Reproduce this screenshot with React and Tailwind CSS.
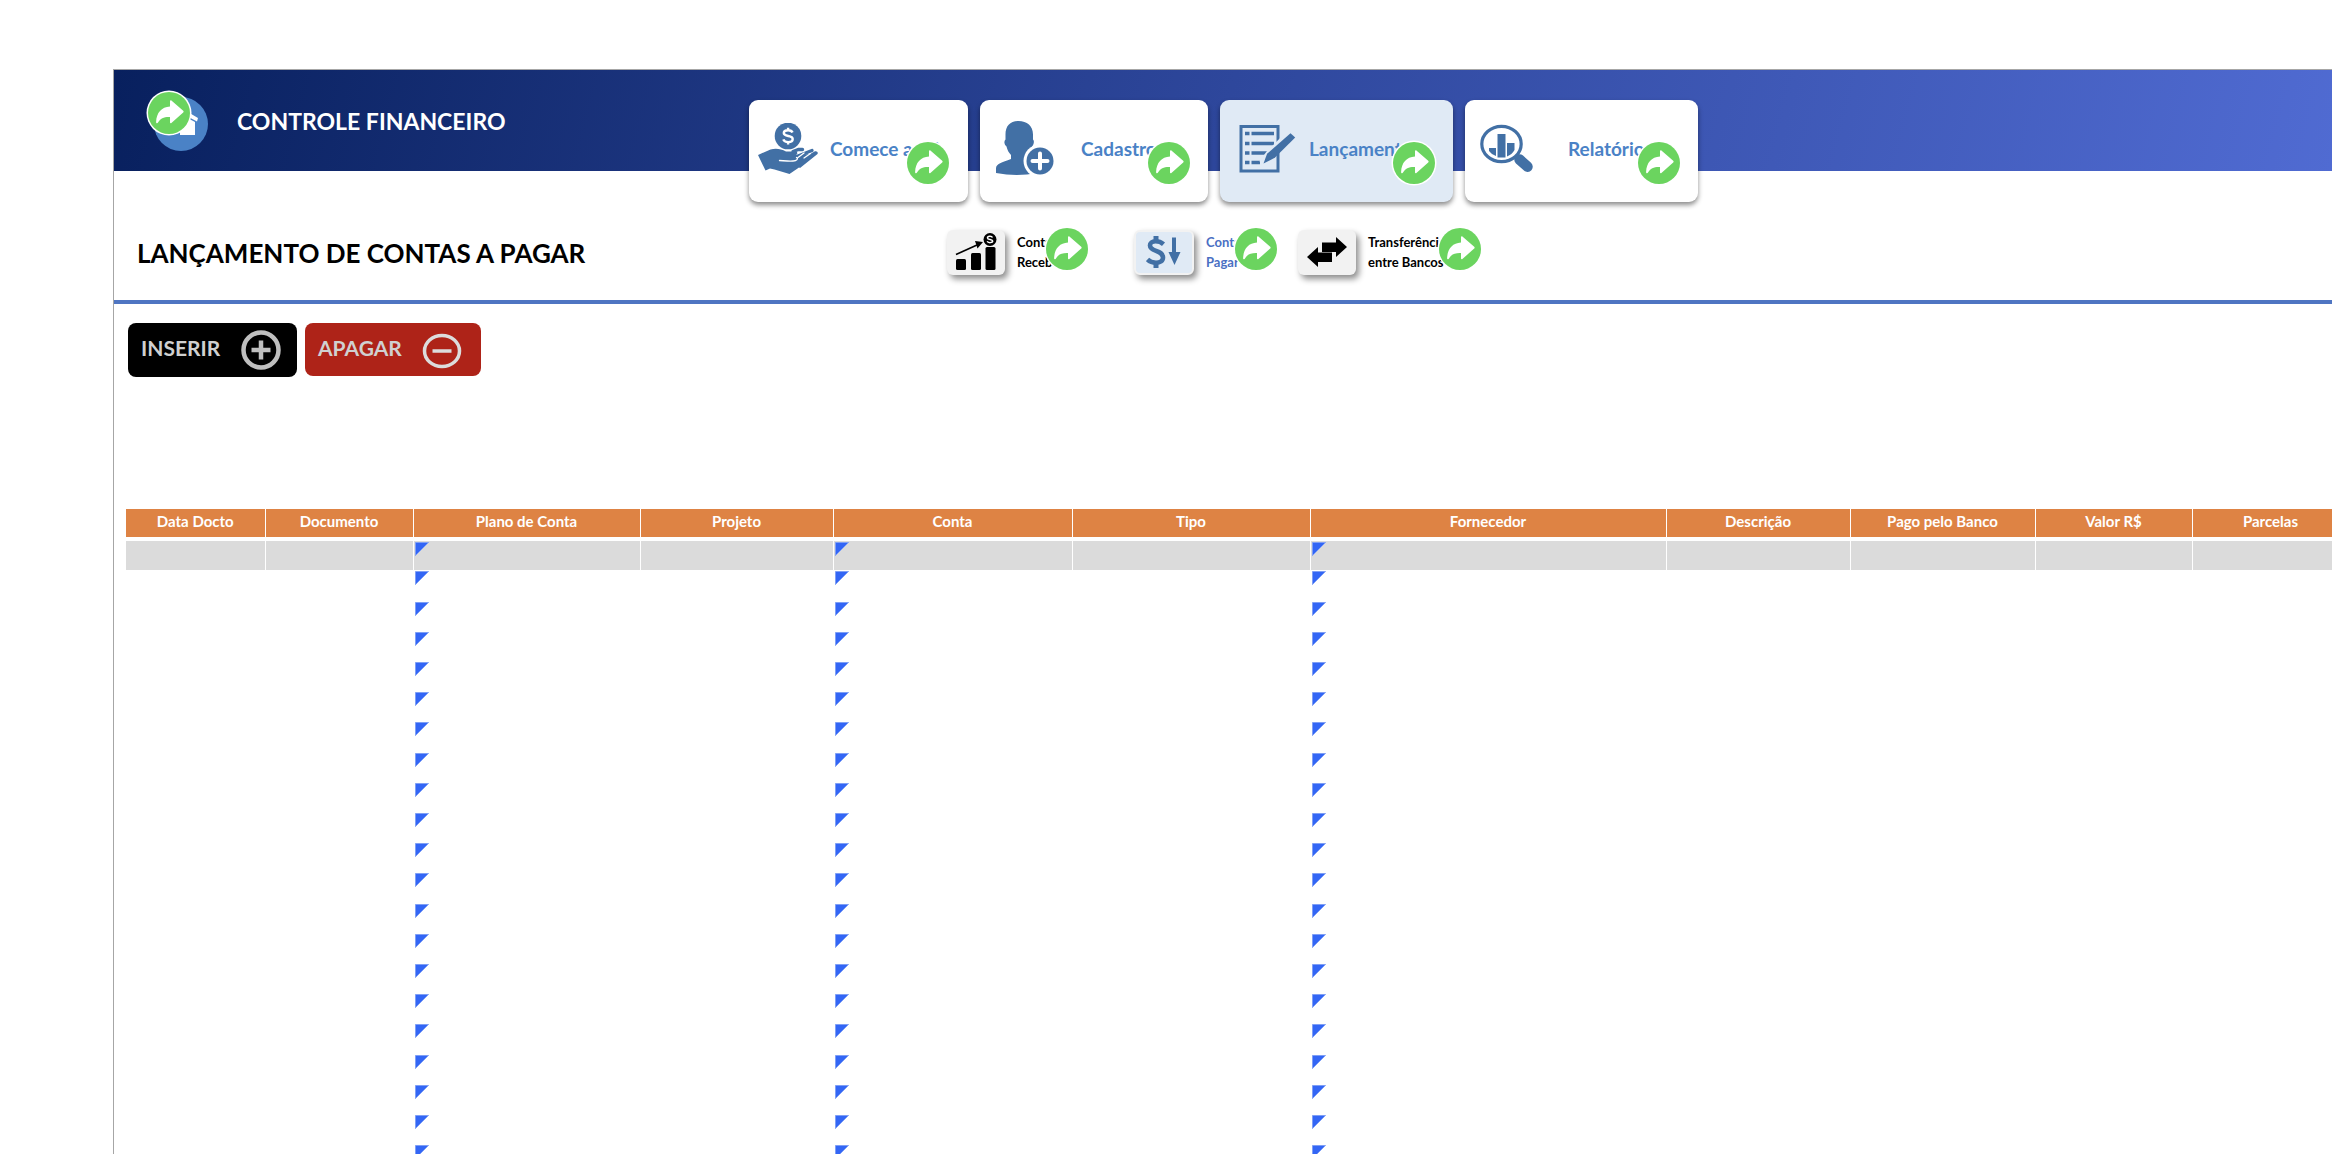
import React from 'react';

const columns = [
  { label: 'Data Docto', width: 'w-[139px]' },
  { label: 'Documento', width: 'w-[148px]' },
  { label: 'Plano de Conta', width: 'w-[227px]', marked: true },
  { label: 'Projeto', width: 'w-[193px]' },
  { label: 'Conta', width: 'w-[239px]', marked: true },
  { label: 'Tipo', width: 'w-[238px]' },
  { label: 'Fornecedor', width: 'w-[356px]', marked: true },
  { label: 'Descrição', width: 'w-[184px]' },
  { label: 'Pago pelo Banco', width: 'w-[185px]' },
  { label: 'Valor R$', width: 'w-[157px]' },
  { label: 'Parcelas', width: 'w-[157px]' },
];

const rows = Array.from({ length: 21 }, (_, i) => i);

const rowClass = (row) => {
  if (row === 0) return 'h-[29px] bg-[#dbdbdb]';
  return row % 5 === 1 ? 'h-[31px]' : 'h-[30px]';
};

// Green round shortcut that lies over the corner of each link
const ShortcutBadge = ({ className }) => (
  <svg viewBox="0 0 46 46" className={`absolute size-[46px] ${className}`} aria-hidden="true">
    <circle cx="23" cy="23" r="22.5" fill="#fff" />
    <circle cx="23" cy="23" r="21" fill="#6bd45f" />
    <path
      d="M24 11.200c0-.8.8-1.100 1.400-.6l11.800 10.200c.6.5.6 1.200 0 1.700L25.400 33c-.6.5-1.400.2-1.400-.6v-5.400c-6-.2-9.400 1-12 5.600-.6 1.100-2 .7-1.900-.6.500-9.300 5.300-14.800 13.900-15.400z"
      fill="#fff"
    />
  </svg>
);

const HandCoinIcon = () => (
  <svg viewBox="0 0 60 52" className="h-[52px] w-[60px]" aria-hidden="true">
    <circle cx="30" cy="13" r="13.300" fill="#4270a5" />
    <path d="M34.500 9.500c-.6-1.700-2.300-2.300-4.400-2.300-2.500 0-4.300 1.100-4.300 2.900 0 4.200 8.900 1.600 8.900 5.900 0 2-1.900 3.100-4.500 3.100-2.400 0-4.200-.8-4.900-2.700M30.100 4.800v2.400M30.100 19.100v2.500" fill="none" stroke="#fff" strokeWidth="2.400" />
    <path d="M0 32 12.500 26.500c5-1.500 10.500-.8 15.500 2l9.500 0c2.200.1 2.600 3 .2 3.400l21-1.400L41 44.500 31.500 51 16.500 46.500 12 45.500 7.500 47.500z" fill="#4270a5" />
    <path d="M31 36.500 41 37.500 56.500 28.500c2-.9 4 .6 3 2.500L42 45z" fill="#4270a5" />
    <path d="M35 28.500 40.500 26.500h4M40 33l14-5.500" stroke="#4270a5" strokeWidth="3.400" strokeLinecap="round" fill="none" />
    <path d="M21.500 37.500c5 .3 9 .8 13.500.5 4 0 5.500-2.500 3.500-3.500M40 34.500l6-4.500M46 35l6.500-4.500" stroke="#fff" strokeWidth="1.300" strokeLinecap="round" fill="none" />
  </svg>
);

const UserPlusIcon = () => (
  <svg viewBox="0 0 60 56" className="h-[56px] w-[60px]" aria-hidden="true">
    <path d="M23.500 0C32 0 38 5 38 13.500v5c1.500 1 1 5-1 7-1 4-4 6.500-4.500 9l1.500 4c2 1.500 6 2.400 8 4V52Q22 56 1 52V47.500c0-5 6-6 15-9.500V34c-2.500-2.500-3.500-5-4.500-8.500C9 23.500 8.800 20 10.500 18.500v-5C10.500 5 15 0 23.500 0z" fill="#4270a5" />
    <circle cx="45" cy="40" r="16.500" fill="#fff" />
    <circle cx="45" cy="40" r="13.500" fill="#4270a5" />
    <path d="M45 32.500v15M37.500 40h15" stroke="#fff" strokeWidth="4" strokeLinecap="round" />
  </svg>
);

const NotePenIcon = () => (
  <svg viewBox="0 0 58 50" className="h-[50px] w-[58px]" aria-hidden="true">
    <rect x="2" y="2.500" width="37" height="44.500" fill="none" stroke="#4270a5" strokeWidth="3" />
    <path d="M6 9.500h4.500M12.500 9.500H35M6 19.500h4.500M12.500 19.500H35M6 29h4.500M12.500 29H28M6 38.500h4.500M12.500 38.500h8.500" stroke="#4270a5" strokeWidth="3.600" />
    <path d="M53 8.500 31 30.500 24 40" stroke="#e0eaf5" strokeWidth="9" />
    <path d="m51.500 9.200 4.700 4.300-20.400 20.300L24.500 39.500l3.600-9.800z" fill="#4270a5" />
  </svg>
);

const ReportIcon = () => (
  <svg viewBox="0 0 54 50" className="h-[50px] w-[54px]" aria-hidden="true">
    <ellipse cx="21.500" cy="20" rx="19.700" ry="17.700" fill="none" stroke="#4270a5" strokeWidth="3.200" />
    <path d="M17.500 10h8v23.500h-8zM9 24h7v8q-5-2-7-5zM27 19h7.500v7q-2.500 4.500-7.500 6.500z" fill="#4270a5" />
    <path d="m39.500 35.500 8 7.200" stroke="#4270a5" strokeWidth="10.500" strokeLinecap="round" />
  </svg>
);

const GrowthIcon = () => (
  <svg viewBox="0 0 44 38" className="h-[38px] w-[44px]" aria-hidden="true">
    <rect x="2" y="26" width="10" height="11" rx="1.500" />
    <rect x="17" y="20" width="10" height="17" rx="1.500" />
    <rect x="31.500" y="14" width="10" height="23" rx="1.500" />
    <path d="M2 21.500 23 12" stroke="#000" strokeWidth="1.600" />
    <path d="m21 8 8 1-5.500 6.500z" />
    <circle cx="36" cy="6.500" r="6.500" />
    <path d="M38.500 4.500c-.8-1.600-5-1.600-5 .4s5.200 1.200 5.200 3.200-4.800 2-5.500.2" fill="none" stroke="#fff" strokeWidth="1.500" />
  </svg>
);

const DollarDownIcon = () => (
  <svg viewBox="0 0 36 32" className="h-[32px] w-[36px]" aria-hidden="true">
    <path d="M17.500 8.200C15 6 12 5.300 9.500 5.300 6 5.300 4 7 4 9.500c0 6.500 13 4.300 13 12 0 3.500-3 5.200-7 5.200-3.500 0-6.500-1.200-8.500-3.200" fill="none" stroke="#4270a5" strokeWidth="4.600" />
    <path d="M10 0v5M10 27v5" stroke="#4270a5" strokeWidth="5" />
    <path d="M26 1.500h4V16h4.500L28.500 29 22.500 16H26z" fill="#4270a5" />
  </svg>
);

const TransferIcon = () => (
  <svg viewBox="0 0 40 30" className="h-[30px] w-[40px]" aria-hidden="true">
    <path d="M15 5.500h14V0l11 10-11 10v-5H15zM0 20 11 10v5.500h14V25H11v5z" />
  </svg>
);

const tabs = [
  { label: 'Comece aqui', Icon: HandCoinIcon, card: 'w-[219px] bg-white pl-[9px]', text: 'ml-[12px]', badge: 'right-[17px]' },
  { label: 'Cadastros', Icon: UserPlusIcon, card: 'w-[228px] bg-white pl-[15px]', text: 'ml-[26px]', badge: 'right-[16px]' },
  { label: 'Lançamentos', Icon: NotePenIcon, card: 'w-[233px] bg-[#e0eaf5] pl-[19px]', text: 'ml-[12px]', badge: 'right-[16px]' },
  { label: 'Relatórios', Icon: ReportIcon, card: 'w-[233px] bg-white pl-[15px]', text: 'ml-[34px]', badge: 'right-[16px]' },
];

const shortcuts = [
  { lines: ['Contas a', 'Receber'], Icon: GrowthIcon, link: 'w-[187px]', box: 'w-[58px] bg-[#f2f2f2]', text: 'text-black', badge: 'left-[97px]' },
  { lines: ['Contas a', 'Pagar'], Icon: DollarDownIcon, link: 'w-[164px]', box: 'w-[60px] border-2 border-[#f2f2f2] bg-[#e0eaf5]', text: 'text-[#4a6fc3]', badge: 'left-[99px]' },
  { lines: ['Transferência', 'entre Bancos'], Icon: TransferIcon, link: 'w-[187px]', box: 'w-[58px] bg-[#f2f2f2]', text: 'text-black', badge: 'left-[139px]' },
];

const Header = () => (
  <header className="flex h-[101px] items-start bg-linear-[105deg] from-[#08205e] via-[#2e479c] to-[#506bd2]">
    <div className="flex w-[635px] shrink-0 items-center pt-[20px] pl-[32px]">
      <a href="#inicio" aria-label="Início" className="relative block h-[62px] w-[63px] shrink-0">
        <svg viewBox="0 0 54 54" className="mt-[7px] ml-[8px] size-[54px]" aria-hidden="true">
          <circle cx="27" cy="27" r="27" fill="#4a82c6" />
          <path d="M27 11 44 21l-1 3.500L27 16 11 24.500 10 21zM27 17.500 41 25v13H26v-8h-6v8h-7V25z" fill="#fff" />
        </svg>
        <ShortcutBadge className="top-0 left-0" />
      </a>
      <h1 className="ml-[28px] text-[23px] leading-[28px] font-bold text-white">CONTROLE FINANCEIRO</h1>
    </div>
    <nav className="flex gap-3 pt-[30px]">
      {tabs.map(({ label, Icon, card, text, badge }) => (
        <a
          key={label}
          href="#"
          className={`relative flex h-[102px] shrink-0 items-center rounded-[9px] pb-[5px] shadow-[0_3px_5px_rgba(0,0,0,0.45)] ${card}`}
        >
          <Icon />
          <span className={`text-[19px] leading-[24px] font-bold whitespace-nowrap text-[#4a82c6] ${text}`}>{label}</span>
          <ShortcutBadge className={`top-[40px] ${badge}`} />
        </a>
      ))}
    </nav>
  </header>
);

const SubHeader = () => (
  <div className="flex h-[133px] items-start border-b-4 border-[#4f75c2] pt-[58px]">
    <h2 className="w-[833px] shrink-0 pt-[7px] pl-[23px] text-[26px] leading-[34px] font-bold text-black">
      LANÇAMENTO DE CONTAS A PAGAR
    </h2>
    <nav className="flex">
      {shortcuts.map(({ lines, Icon, link, box, text, badge }) => (
        <a key={lines.join(' ')} href="#" className={`relative flex h-[46px] shrink-0 items-center ${link}`}>
          <span className={`flex h-[45px] items-center justify-center rounded-[6px] shadow-[3px_4px_6px_rgba(0,0,0,0.45)] ${box}`}>
            <Icon />
          </span>
          <span className={`ml-[12px] text-[13px] leading-[20px] font-bold whitespace-nowrap ${text}`}>
            {lines[0]}
            <br />
            {lines[1]}
          </span>
          <ShortcutBadge className={`-top-[3px] ${badge}`} />
        </a>
      ))}
    </nav>
  </div>
);

const Actions = () => (
  <div className="flex gap-2 pt-[19px] pl-[14px]">
    <button type="button" className="flex h-[54px] w-[169px] items-center rounded-[8px] bg-black pl-[13px] text-[#d0d0d0]">
      <span className="w-[100px] pb-1 text-left text-[21px] leading-[24px] font-bold">INSERIR</span>
      <svg viewBox="0 0 40 40" className="size-[40px]" fill="none" stroke="#bfbfbf" aria-hidden="true">
        <circle cx="20" cy="20" r="17.500" strokeWidth="4.500" />
        <path d="M20 10.500v19M10.500 20h19" strokeWidth="4.500" />
      </svg>
    </button>
    <button type="button" className="flex h-[53px] w-[176px] items-center rounded-[8px] bg-[#ae2318] pl-[13px] text-[#d0d0d0]">
      <span className="w-[104px] pb-1 text-left text-[21px] leading-[24px] font-bold">APAGAR</span>
      <svg viewBox="0 0 40 36" className="mt-[3px] h-[36px] w-[40px]" fill="none" stroke="#dcdcdc" aria-hidden="true">
        <ellipse cx="20" cy="18" rx="17.500" ry="15.500" strokeWidth="3.500" />
        <path d="M10.500 18h19" strokeWidth="3.500" />
      </svg>
    </button>
  </div>
);

const EntriesTable = () => (
  <div className="mt-[132px] overflow-hidden pl-[12px]">
    <table className="w-[2223px] table-fixed border-collapse">
      <thead>
        <tr className="h-[28px] bg-[#de8344] text-white">
          {columns.map(({ label, width }) => (
            <th key={label} scope="col" className={`border-r border-white p-0 pb-1 text-[15px] leading-[20px] font-bold ${width}`}>
              {label}
            </th>
          ))}
        </tr>
        <tr className="h-[4px]" />
      </thead>
      <tbody>
        {rows.map((row) => (
          <tr key={row} className={rowClass(row)}>
            {columns.map(({ label, marked }) => (
              <td key={label} className="border-r border-white p-0 pt-px pl-px align-top">
                {marked && (
                  <svg viewBox="0 0 14 14" className="block size-[14px]" aria-hidden="true">
                    <path d="M.5.5h13L.5 13.500z" fill="#3366f5" stroke="#7f9ff5" strokeWidth="1" />
                  </svg>
                )}
              </td>
            ))}
          </tr>
        ))}
      </tbody>
    </table>
  </div>
);

export default function App() {
  return (
    <div className="h-screen overflow-hidden bg-white pt-[69px] pl-[113px] font-['Lato','Liberation_Sans',sans-serif]">
      <main className="h-full border-t border-l border-[#a6a6a6]">
        <Header />
        <SubHeader />
        <Actions />
        <EntriesTable />
      </main>
    </div>
  );
}
